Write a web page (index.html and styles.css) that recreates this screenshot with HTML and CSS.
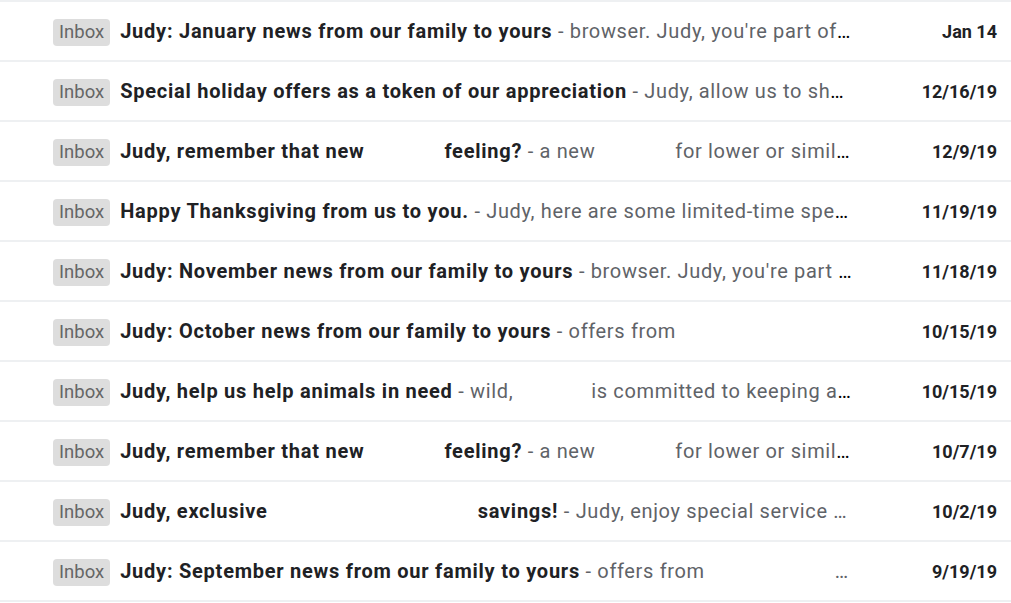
FILE: index.html
```html
<!DOCTYPE html>
<html>
<head>
<meta charset="utf-8">
<link rel="stylesheet" href="styles.css">
</head>
<body>
<div class="list">
  <div class="row">
    <span class="badge">Inbox</span>
    <div class="text"><span class="subj">Judy: January news from our family to yours</span><span class="snip"> - browser. Judy, you're part of<span class="gap" style="width:40px"></span></span></div>
    <div class="date">Jan 14</div>
  </div>
  <div class="row">
    <span class="badge">Inbox</span>
    <div class="text"><span class="subj">Special holiday offers as a token of our appreciation</span><span class="snip"> - Judy, allow us to show our gratitude this season</span></div>
    <div class="date">12/16/19</div>
  </div>
  <div class="row">
    <span class="badge">Inbox</span>
    <div class="text"><span class="subj">Judy, remember that new<span class="gap" style="width:80px"></span>feeling?</span><span class="snip"> - a new<span class="gap" style="width:80px"></span>for lower or similar monthly payments</span></div>
    <div class="date">12/9/19</div>
  </div>
  <div class="row">
    <span class="badge">Inbox</span>
    <div class="text"><span class="subj">Happy Thanksgiving from us to you.</span><span class="snip"> - Judy, here are some limited-time special offers</span></div>
    <div class="date">11/19/19</div>
  </div>
  <div class="row">
    <span class="badge">Inbox</span>
    <div class="text"><span class="subj">Judy: November news from our family to yours</span><span class="snip"> - browser. Judy, you're part of our family and we want</span></div>
    <div class="date">11/18/19</div>
  </div>
  <div class="row">
    <span class="badge">Inbox</span>
    <div class="text"><span class="subj">Judy: October news from our family to yours</span><span class="snip"> - offers from</span></div>
    <div class="date">10/15/19</div>
  </div>
  <div class="row">
    <span class="badge">Inbox</span>
    <div class="text"><span class="subj">Judy, help us help animals in need</span><span class="snip"> - wild,<span class="gap" style="width:78px"></span>is committed to keeping animals safe</span></div>
    <div class="date">10/15/19</div>
  </div>
  <div class="row">
    <span class="badge">Inbox</span>
    <div class="text"><span class="subj">Judy, remember that new<span class="gap" style="width:80px"></span>feeling?</span><span class="snip"> - a new<span class="gap" style="width:80px"></span>for lower or similar monthly payments</span></div>
    <div class="date">10/7/19</div>
  </div>
  <div class="row">
    <span class="badge">Inbox</span>
    <div class="text"><span class="subj">Judy, exclusive<span class="gap" style="width:210px"></span>savings!</span><span class="snip"> - Judy, enjoy special service …</span></div>
    <div class="date">10/2/19</div>
  </div>
  <div class="row">
    <span class="badge">Inbox</span>
    <div class="text"><span class="subj">Judy: September news from our family to yours</span><span class="snip"> - offers from<span class="gap" style="width:130px"></span>…</span></div>
    <div class="date">9/19/19</div>
  </div>
</div>
</body>
</html>
```
FILE: styles.css
```css
html, body {
  margin: 0;
  padding: 0;
  background: #ffffff;
}
body {
  font-family: Roboto, "Liberation Sans", Arial, sans-serif;
  width: 1011px;
  height: 603px;
  overflow: hidden;
}
.list {
  border-top: 2px solid #eef0f2;
}
.row {
  display: flex;
  align-items: center;
  height: 58px;
  border-bottom: 2px solid #eef0f2;
  padding-left: 53px;
  padding-right: 14px;
}
.badge {
  flex: none;
  background: #dddddd;
  color: #666666;
  font-size: 18.5px;
  line-height: 27px;
  height: 27px;
  padding: 0 6px;
  border-radius: 4px;
  margin-right: 10px;
  margin-top: 2px;
}
.text {
  flex: none;
  width: 735px;
  white-space: nowrap;
  overflow: hidden;
  text-overflow: ellipsis;
  font-size: 20px;
}
.subj {
  font-weight: 700;
  color: #202124;
  letter-spacing: 0.75px;
}
.snip {
  color: #5f6368;
  letter-spacing: 0.65px;
}
.gap {
  display: inline-block;
}
.date {
  flex: 1;
  text-align: right;
  font-size: 18px;
  font-weight: 700;
  color: #202124;
}
```
